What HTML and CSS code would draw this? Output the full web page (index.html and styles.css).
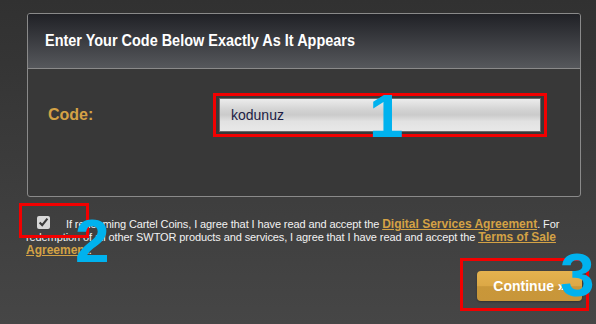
FILE: index.html
```html
<!DOCTYPE html>
<html lang="en">
<head>
    <meta charset="UTF-8">
    <meta name="viewport" content="width=device-width, initial-scale=1.0">
    <title>Redeem Code</title>
    <link rel="stylesheet" href="styles.css">
</head>
<body>
    <div class="page">
        <!-- Code Panel -->
        <div class="code-panel">
            <div class="panel-header">
                <h2>Enter Your Code Below Exactly As It Appears</h2>
            </div>
            <div class="panel-body">
                <label class="code-label" for="code">Code:</label>
                <div class="input-wrap">
                    <input id="code" class="code-input" type="text" value="kodunuz">
                    <span class="mark mark-1">1</span>
                </div>
            </div>
        </div>

        <!-- Agreement -->
        <div class="agreement">
            <input type="checkbox" class="agree-check" checked>If redeeming Cartel Coins, I agree that I have read and accept the <a href="#">Digital Services Agreement</a>. For redemption of all other SWTOR products and services, I agree that I have read and accept the <a href="#">Terms of Sale Agreement</a>.
            <span class="check-box"></span>
            <span class="mark mark-2">2</span>
        </div>

        <!-- Continue -->
        <div class="actions">
            <div class="button-wrap">
                <button class="continue-btn">Continue &raquo;</button>
                <span class="mark mark-3">3</span>
            </div>
        </div>
    </div>
</body>
</html>
```

FILE: styles.css
```css
/* General Styling */
body {
    margin: 0;
    padding: 0;
    font-family: 'Liberation Sans', Arial, sans-serif;
    background: linear-gradient(to bottom, #313131, #464646);
    height: 324px;
    overflow: hidden;
    color: #f2f2f2;
}

.page {
    position: relative;
    padding: 13px 0 0 27px;
    width: 556px;
}

/* Code Panel */
.code-panel {
    width: 552px;
    height: 182px;
    border: 1px solid #8a8a8a;
    border-radius: 3px;
    background: #383838;
    overflow: hidden;
}

.panel-header {
    height: 54px;
    border-bottom: 1px solid #8a8a8a;
    background: linear-gradient(to bottom, #202126, #56585c);
    display: flex;
    align-items: center;
    padding-left: 17px;
}

.panel-header h2 {
    margin: 0;
    font-size: 17px;
    font-weight: bold;
    color: #fff;
    transform: scaleX(0.85);
    transform-origin: left center;
    white-space: nowrap;
}

.panel-body {
    display: flex;
    align-items: center;
    padding: 24px 0 0 20px;
}

.code-label {
    width: 165px;
    font-size: 16px;
    font-weight: bold;
    color: #d4a245;
}

/* Input with red annotation box */
.input-wrap {
    position: relative;
    border: 3px solid #f20000;
    padding: 2px 3px;
}

.code-input {
    display: block;
    box-sizing: border-box;
    width: 322px;
    height: 34px;
    border: 1px solid #6a6a6a;
    padding: 0 0 0 11px;
    font-family: 'Liberation Sans', Arial, sans-serif;
    font-size: 14px;
    color: #1c1c44;
    background: linear-gradient(to bottom, #ececec 0%, #d2d2d2 35%, #cbcbcb 50%, #e2e2e2 70%, #e8e8e8 100%);
    outline: none;
}

/* Annotation numbers */
.mark {
    position: absolute;
    font-family: 'Liberation Sans', Arial, sans-serif;
    font-size: 62px;
    font-weight: bold;
    line-height: 1;
    color: #00b2ee;
}

.mark-1 {
    left: 153px;
    top: -11px;
}

.mark-2 {
    left: 49px;
    top: -8px;
}

.mark-3 {
    left: 97px;
    top: -17px;
}

/* Agreement text */
.agreement {
    position: relative;
    margin: 21px 0 0 -1px;
    width: 545px;
    font-size: 11px;
    line-height: 13px;
    letter-spacing: -0.1px;
}

.agreement a {
    color: #d4a245;
    font-weight: bold;
    font-size: 12px;
    line-height: 13px;
    letter-spacing: 0;
}

.agree-check {
    width: 13px;
    height: 13px;
    margin: -6px 16px 0 11px;
    vertical-align: -1px;
    accent-color: #d8d8d8;
}

/* Red annotation box round the checkbox */
.check-box {
    position: absolute;
    left: -7px;
    top: -15px;
    width: 70px;
    height: 35px;
    box-sizing: border-box;
    border: 3px solid #f20000;
}

/* Continue button */
.actions {
    display: flex;
    justify-content: flex-end;
    margin-top: 1px;
}

.button-wrap {
    position: relative;
    border: 3px solid #f20000;
    padding: 10px 4px 7px 14px;
    margin-right: -6px;
}

.continue-btn {
    display: block;
    width: 105px;
    height: 30px;
    border: none;
    border-radius: 4px;
    background: linear-gradient(to bottom, #e4b24f 0%, #dca846 50%, #c99739 52%, #c8963a 100%);
    color: #fff;
    font-family: 'Liberation Sans', Arial, sans-serif;
    font-size: 14px;
    font-weight: bold;
    box-shadow: 0 1px 2px rgba(0, 0, 0, 0.3);
}
```
